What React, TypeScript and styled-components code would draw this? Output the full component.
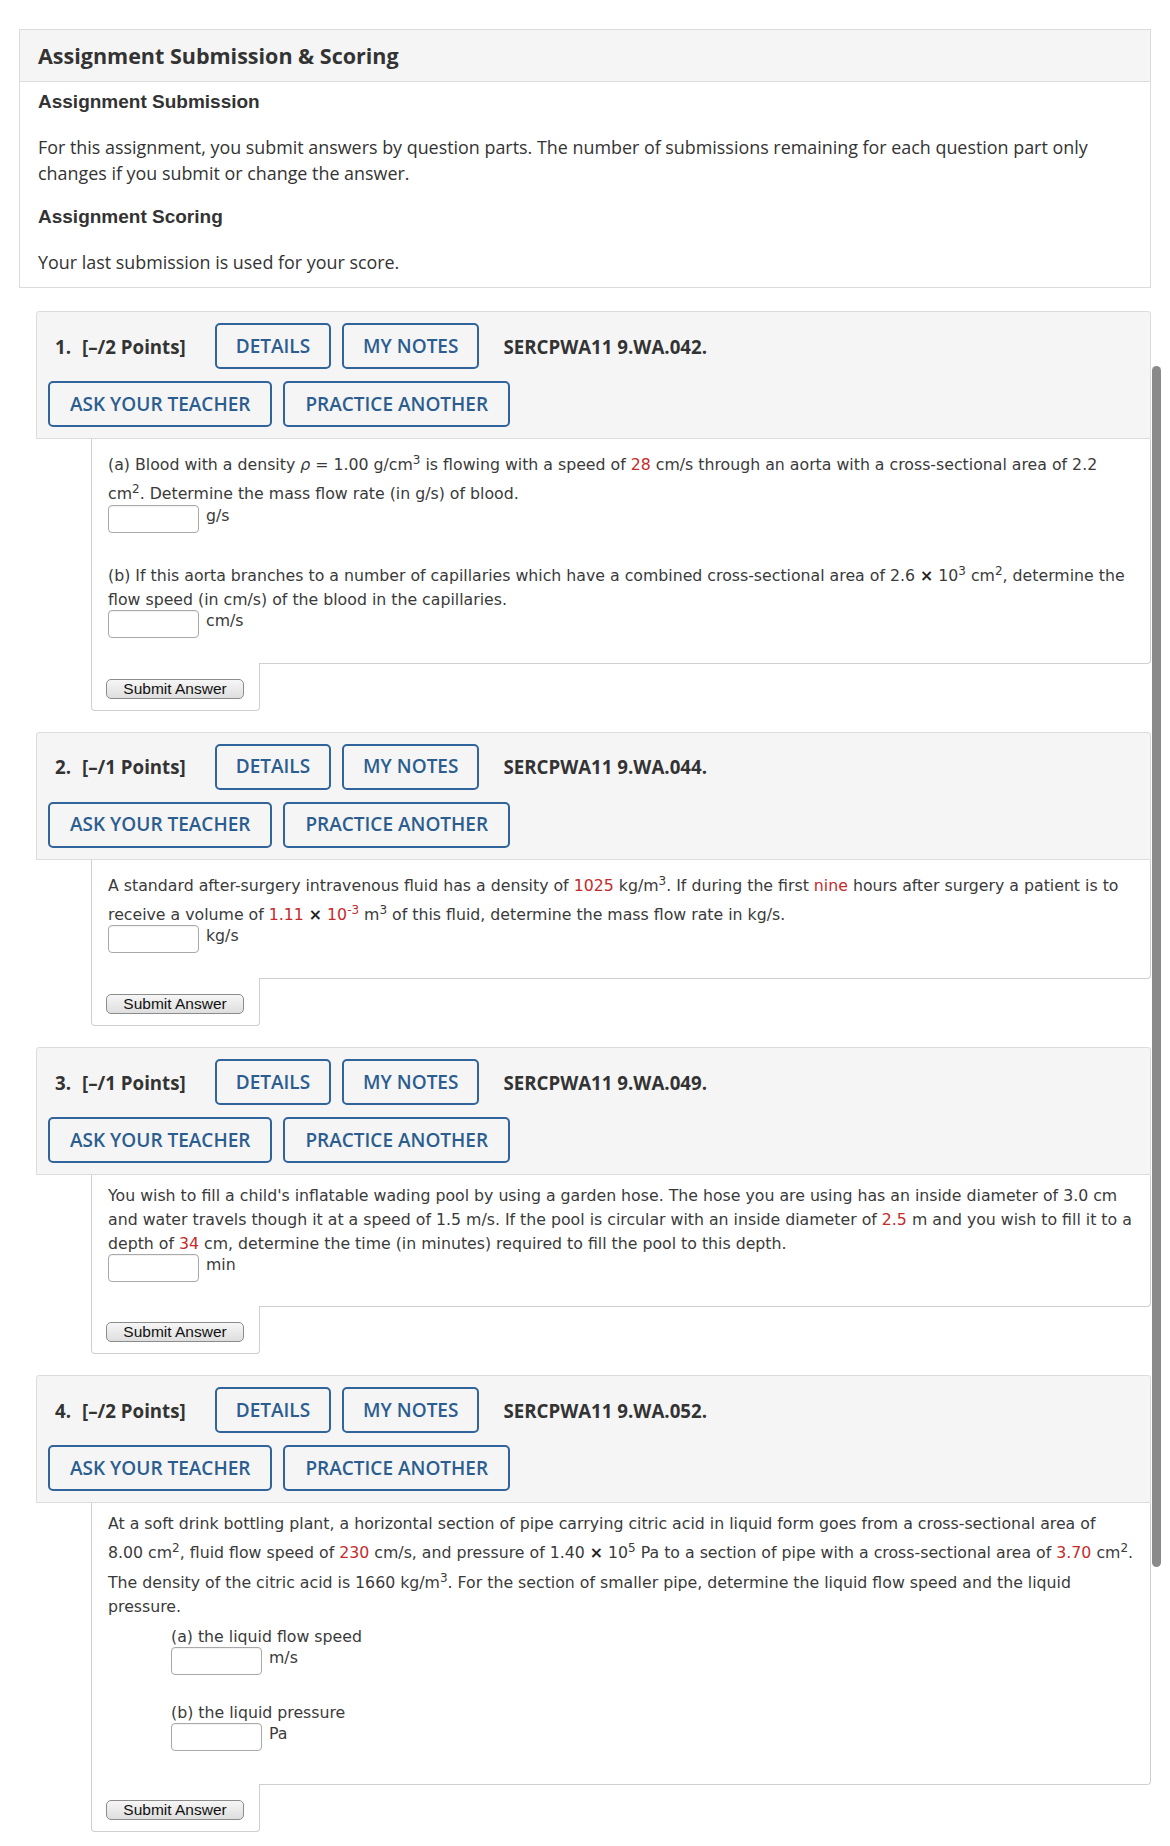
import React from 'react';
import styled, { createGlobalStyle } from 'styled-components';

const GlobalStyle = createGlobalStyle`
  html, body {
    margin: 0;
    padding: 0;
    background: #fff;
  }
  body {
    font-family: 'Open Sans', 'Liberation Sans', sans-serif;
    color: #333;
  }
  * {
    box-sizing: border-box;
  }
`;

const Page = styled.div`
  position: relative;
  width: 1170px;
  padding: 29px 19px 16px 19px;
`;

const ScrollThumb = styled.div`
  position: absolute;
  left: 1152px;
  top: 366px;
  width: 9px;
  height: 1201px;
  border-radius: 5px;
  background: #8a8a8a;
`;

/* ---------- info panel ---------- */

const InfoPanel = styled.section`
  border: 1px solid #dcdcdc;
  background: #fff;
`;

const InfoHeader = styled.div`
  height: 52px;
  display: flex;
  align-items: center;
  padding: 0 18px;
  background: #f5f5f5;
  border-bottom: 1px solid #dcdcdc;
`;

const InfoTitle = styled.h2`
  margin: 0;
  font-size: 21.5px;
  font-weight: 700;
  color: #333;
`;

const InfoBody = styled.div`
  padding: 0 18px 12px;
`;

const InfoHeading = styled.h4<{ $first?: boolean }>`
  margin: ${(p) => (p.$first ? '8px' : '19px')} 0 0;
  font-family: 'Liberation Sans', Arial, sans-serif;
  font-size: 19px;
  font-weight: 700;
  line-height: 23px;
  color: #333;
`;

const InfoText = styled.p`
  margin: 21px 0 0;
  font-size: 17.9px;
  line-height: 26px;
  color: #333;
`;

/* ---------- question ---------- */

const QuestionList = styled.div`
  display: flex;
  flex-direction: column;
  gap: 21px;
  margin: 23px 0 0 17px;
`;

const Question = styled.article``;

const QuestionHeader = styled.header`
  display: flex;
  flex-direction: column;
  gap: 12px;
  padding: 11px;
  background: #f5f5f5;
  border: 1px solid #dcdcdc;
  border-radius: 3px 3px 0 0;
`;

const HeaderRow = styled.div`
  display: flex;
  align-items: center;
  gap: 11px;
`;

const PointsLabel = styled.span`
  margin: 0 18px 0 7px;
  font-size: 18.7px;
  font-weight: 700;
  color: #333;
  white-space: nowrap;

  & > span {
    margin-left: 11px;
  }
`;

const ProblemCode = styled.span`
  margin-left: 13px;
  font-size: 18.7px;
  font-weight: 700;
  color: #333;
`;

const ActionButton = styled.button<{ $wide?: boolean }>`
  height: 46px;
  padding: 0 ${(p) => (p.$wide ? 20 : 19)}px;
  border: 2px solid #30649a;
  border-radius: 5px;
  background: transparent;
  color: #2c5d8f;
  font-family: 'Open Sans', sans-serif;
  font-size: 19px;
  font-weight: 600;
  line-height: 1;
  white-space: nowrap;
  cursor: pointer;
`;

const QuestionBody = styled.div<{ $bottom: number }>`
  margin-left: 55px;
  padding: 9px 16px ${(p) => p.$bottom}px;
  border: 1px solid #cfcfcf;
  border-top: none;
  border-radius: 0 0 4px 0;
  font-family: 'DejaVu Sans', Verdana, sans-serif;
  font-size: 15.75px;
  line-height: 24px;
  color: #3a3a3a;

  sup {
    font-size: 12px;
  }
`;

const Part = styled.div<{ $gap?: number }>`
  & + & {
    margin-top: ${(p) => p.$gap ?? 30}px;
  }
`;

const Prompt = styled.div``;

const SubParts = styled.div`
  margin: 6px 0 0 63px;
`;

const AnswerRow = styled.div`
  display: flex;
  align-items: flex-start;
  gap: 7px;
  margin-top: -2px;
`;

const AnswerInput = styled.input`
  width: 91px;
  height: 28px;
  border: 1px solid #a9a9a9;
  border-radius: 4px;
  background: #fff;
  box-shadow: inset 0 1px 1px rgba(0, 0, 0, 0.06);
`;

const Unit = styled.span`
  line-height: 22px;
`;

const Red = styled.span`
  color: #c42b2b;
`;

const Times = styled.b`
  color: #222;
`;

const SubmitTab = styled.div`
  position: relative;
  width: 169px;
  margin: -1px 0 0 55px;
  padding: 16px 0 11px 14px;
  background: #fff;
  border: 1px solid #cfcfcf;
  border-top: none;
  border-radius: 0 0 4px 4px;
`;

const SubmitButton = styled.button`
  display: block;
  width: 138px;
  height: 20px;
  padding: 0;
  border: 1px solid #8c8c8c;
  border-radius: 5px;
  background: linear-gradient(#f6f6f6, #dedede);
  color: #111;
  font-family: 'Liberation Sans', Arial, sans-serif;
  font-size: 15.5px;
  line-height: 18px;
`;

type QuestionProps = {
  num: number;
  points: number;
  code: string;
  bottom: number;
  children: React.ReactNode;
};

function QuestionBlock({ num, points, code, bottom, children }: QuestionProps) {
  return (
    <Question>
      <QuestionHeader>
        <HeaderRow>
          <PointsLabel>
            {num}.<span>[–/{points} Points]</span>
          </PointsLabel>
          <ActionButton>DETAILS</ActionButton>
          <ActionButton>MY NOTES</ActionButton>
          <ProblemCode>{code}</ProblemCode>
        </HeaderRow>
        <HeaderRow>
          <ActionButton $wide>ASK YOUR TEACHER</ActionButton>
          <ActionButton $wide>PRACTICE ANOTHER</ActionButton>
        </HeaderRow>
      </QuestionHeader>
      <QuestionBody $bottom={bottom}>{children}</QuestionBody>
      <SubmitTab>
        <SubmitButton>Submit Answer</SubmitButton>
      </SubmitTab>
    </Question>
  );
}

function Answer({ unit }: { unit: string }) {
  return (
    <AnswerRow>
      <AnswerInput type="text" />
      <Unit>{unit}</Unit>
    </AnswerRow>
  );
}

export default function App() {
  return (
    <Page>
      <GlobalStyle />
      <InfoPanel>
        <InfoHeader>
          <InfoTitle>Assignment Submission &amp; Scoring</InfoTitle>
        </InfoHeader>
        <InfoBody>
          <InfoHeading $first>Assignment Submission</InfoHeading>
          <InfoText>
            For this assignment, you submit answers by question parts. The number of submissions
            remaining for each question part only changes if you submit or change the answer.
          </InfoText>
          <InfoHeading>Assignment Scoring</InfoHeading>
          <InfoText>Your last submission is used for your score.</InfoText>
        </InfoBody>
      </InfoPanel>

      <QuestionList>
        <QuestionBlock num={1} points={2} code="SERCPWA11 9.WA.042." bottom={25}>
          <Part>
            <Prompt>
              (a) Blood with a density <i>ρ</i> = 1.00 g/cm<sup>3</sup> is flowing with a speed of{' '}
              <Red>28</Red> cm/s through an aorta with a cross-sectional area of 2.2 cm<sup>2</sup>.
              Determine the mass flow rate (in g/s) of blood.
            </Prompt>
            <Answer unit="g/s" />
          </Part>
          <Part>
            <Prompt>
              (b) If this aorta branches to a number of capillaries which have a combined
              cross-sectional area of 2.6 <Times>×</Times> 10<sup>3</sup> cm<sup>2</sup>, determine
              the flow speed (in cm/s) of the blood in the capillaries.
            </Prompt>
            <Answer unit="cm/s" />
          </Part>
        </QuestionBlock>

        <QuestionBlock num={2} points={1} code="SERCPWA11 9.WA.044." bottom={25}>
          <Part>
            <Prompt>
              A standard after-surgery intravenous fluid has a density of <Red>1025</Red> kg/m
              <sup>3</sup>. If during the first <Red>nine</Red> hours after surgery a patient is to
              receive a volume of <Red>1.11</Red> <Times>×</Times>{' '}
              <Red>
                10<sup>-3</sup>
              </Red>{' '}
              m<sup>3</sup> of this fluid, determine the mass flow rate in kg/s.
            </Prompt>
            <Answer unit="kg/s" />
          </Part>
        </QuestionBlock>

        <QuestionBlock num={3} points={1} code="SERCPWA11 9.WA.049." bottom={24}>
          <Part>
            <Prompt>
              You wish to fill a child's inflatable wading pool by using a garden hose. The hose you
              are using has an inside diameter of 3.0 cm and water travels though it at a speed of
              1.5 m/s. If the pool is circular with an inside diameter of <Red>2.5</Red> m and you
              wish to fill it to a depth of <Red>34</Red> cm, determine the time (in minutes)
              required to fill the pool to this depth.
            </Prompt>
            <Answer unit="min" />
          </Part>
        </QuestionBlock>

        <QuestionBlock num={4} points={2} code="SERCPWA11 9.WA.052." bottom={33}>
          <Prompt>
            At a soft drink bottling plant, a horizontal section of pipe carrying citric acid in
            liquid form goes from a cross-sectional area of 8.00 cm<sup>2</sup>, fluid flow speed of{' '}
            <Red>230</Red> cm/s, and pressure of 1.40 <Times>×</Times> 10<sup>5</sup> Pa to a section
            of pipe with a cross-sectional area of <Red>3.70</Red> cm<sup>2</sup>. The density of
            the citric acid is 1660 kg/m<sup>3</sup>. For the section of smaller pipe, determine the
            liquid flow speed and the liquid pressure.
          </Prompt>
          <SubParts>
            <Part $gap={26}>
              <Prompt>(a) the liquid flow speed</Prompt>
              <Answer unit="m/s" />
            </Part>
            <Part $gap={26}>
              <Prompt>(b) the liquid pressure</Prompt>
              <Answer unit="Pa" />
            </Part>
          </SubParts>
        </QuestionBlock>
      </QuestionList>
      <ScrollThumb />
    </Page>
  );
}
